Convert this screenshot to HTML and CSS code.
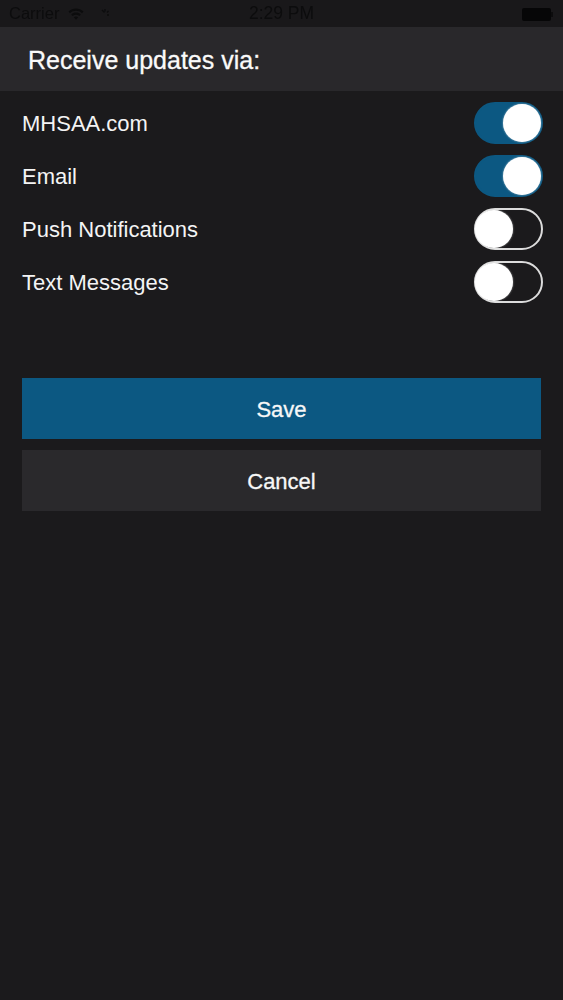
FILE: index.html
```html
<!DOCTYPE html>
<html lang="en">
<head>
    <meta charset="UTF-8">
    <meta name="viewport" content="width=device-width, initial-scale=1.0">
    <title>Receive updates</title>
    <link rel="stylesheet" href="styles.css">
</head>
<body>
    <div class="status-bar">
        <div class="status-left">
            <span>Carrier</span>
            <svg class="wifi" width="16" height="12" viewBox="0 0 16 12">
                <path d="M0.5 3.6C4.8 -0.4 11.2 -0.4 15.5 3.6L14 5.2C10.5 2 5.5 2 2 5.2Z"/>
                <path d="M3.2 6.4C6 3.9 10 3.9 12.8 6.4L11.3 8C9.3 6.3 6.7 6.3 4.7 8Z"/>
                <path d="M5.8 9.2C7.1 8.2 8.9 8.2 10.2 9.2L8 11.8Z"/>
            </svg>
            <svg class="loader" width="12" height="12" viewBox="0 0 12 12">
                <path d="M3 2L5.5 4.5M6 1V3.5M9.5 3L8 4.5M10 7H8" stroke-width="1.3"/>
            </svg>
        </div>
        <div class="status-time">2:29 PM</div>
        <div class="battery"><div class="battery-fill"></div><div class="battery-tip"></div></div>
    </div>

    <div class="page-header">Receive updates via:</div>

    <div class="options">
        <div class="option">
            <span>MHSAA.com</span>
            <div class="toggle on"><div class="knob"></div></div>
        </div>
        <div class="option">
            <span>Email</span>
            <div class="toggle on"><div class="knob"></div></div>
        </div>
        <div class="option">
            <span>Push Notifications</span>
            <div class="toggle"><div class="knob"></div></div>
        </div>
        <div class="option">
            <span>Text Messages</span>
            <div class="toggle"><div class="knob"></div></div>
        </div>
    </div>

    <div class="actions">
        <button class="btn btn-save">Save</button>
        <button class="btn btn-cancel">Cancel</button>
    </div>
</body>
</html>
```

FILE: styles.css
```css
html, body {
    height: 100%;
}

body {
    margin: 0;
    background: #1b1a1c;
    color: #f4f4f4;
    font-family: 'Liberation Sans', Arial, sans-serif;
    overflow: hidden;
}

.status-bar {
    height: 27px;
    display: flex;
    align-items: center;
    justify-content: space-between;
    padding: 0 9px;
    background: #19181a;
    color: #0c0c0d;
    font-size: 16.5px;
    position: relative;
}

.status-left {
    display: flex;
    align-items: center;
    gap: 9px;
    filter: blur(0.5px);
}

.wifi {
    fill: #0c0c0d;
}

.loader {
    margin-left: 6px;
    fill: none;
    stroke: #0c0c0d;
}

.status-time {
    position: absolute;
    left: 0;
    right: 0;
    text-align: center;
    font-size: 17.5px;
    filter: blur(0.5px);
}

.battery {
    display: flex;
    align-items: center;
    height: 13px;
    width: 31px;
    position: relative;
    top: 1px;
    left: -1px;
    filter: blur(0.5px);
}

.battery-fill {
    width: 29px;
    height: 100%;
    background: #060607;
    border-radius: 2px;
}

.battery-tip {
    width: 2px;
    height: 5px;
    background: #0c0c0d;
}

.page-header {
    height: 64px;
    line-height: 66px;
    padding-left: 28px;
    background: #29282b;
    color: #fafafa;
    font-size: 25px;
    -webkit-text-stroke: 0.3px #fafafa;
}

.options {
    padding: 11px 20px 0 22px;
}

.option {
    height: 42px;
    margin-bottom: 11px;
    display: flex;
    align-items: center;
    justify-content: space-between;
    font-size: 22px;
}

.option span {
    padding-top: 2px;
}

.toggle {
    width: 69px;
    height: 42px;
    box-sizing: border-box;
    border: 2px solid #dcdcdc;
    border-radius: 21px;
    position: relative;
}

.toggle.on {
    background: #0c5882;
    border-color: #0c5882;
}

.knob {
    position: absolute;
    top: 0;
    left: -1px;
    width: 38px;
    height: 38px;
    background: #fff;
    border-radius: 50%;
    box-shadow: 0 0 2px rgba(255, 255, 255, 0.6);
}

.toggle.on .knob {
    left: 27px;
}

.actions {
    padding: 0 22px;
    margin-top: 75px;
    display: flex;
    flex-direction: column;
    gap: 11px;
}

.btn {
    height: 61px;
    padding: 2px 0 0;
    border: none;
    color: #f7f7f7;
    font-family: inherit;
    font-size: 22px;
    -webkit-text-stroke: 0.3px #f7f7f7;
}

.btn-save {
    background: #0c5882;
}

.btn-cancel {
    background: #2a292c;
}
```
